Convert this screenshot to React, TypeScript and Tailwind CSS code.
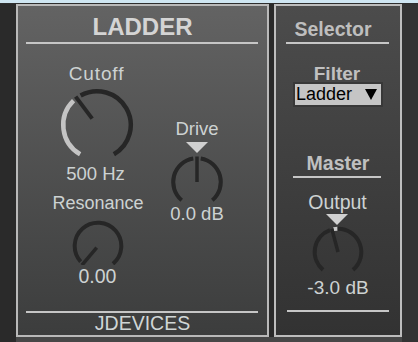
import React from "react";

type Arc = { a1: number; a2: number; color: string };
type KnobProps = {
  w: number;
  h: number;
  cx: number;
  cy: number;
  r: number;
  sw: number;
  arcs: Arc[];
  pa: number;
  pr1: number;
  pr2: number;
  psw: number;
};

const rad = (a: number) => (a * Math.PI) / 180;
const pt = (cx: number, cy: number, r: number, a: number) => [
  cx + r * Math.sin(rad(a)),
  cy - r * Math.cos(rad(a)),
];
const arcPath = (cx: number, cy: number, r: number, a1: number, a2: number) => {
  const [x1, y1] = pt(cx, cy, r, a1);
  const [x2, y2] = pt(cx, cy, r, a2);
  const large = a2 - a1 > 180 ? 1 : 0;
  return `M ${x1} ${y1} A ${r} ${r} 0 ${large} 1 ${x2} ${y2}`;
};

function Knob({ w, h, cx, cy, r, sw, arcs, pa, pr1, pr2, psw }: KnobProps) {
  const [x1, y1] = pt(cx, cy, pr1, pa);
  const [x2, y2] = pt(cx, cy, pr2, pa);
  return (
    <svg width={w} height={h} viewBox={`0 0 ${w} ${h}`} className="block shrink-0">
      {arcs.map((a, i) => (
        <path key={i} d={arcPath(cx, cy, r, a.a1, a.a2)} fill="none" stroke={a.color} strokeWidth={sw} />
      ))}
      <line x1={x1} y1={y1} x2={x2} y2={y2} stroke="#262626" strokeWidth={psw} />
    </svg>
  );
}

function Tri() {
  return (
    <svg width="22" height="11" viewBox="0 0 22 11" className="block shrink-0">
      <polygon points="0,0 22,0 11,11" fill="#d0d0d0" />
    </svg>
  );
}

const DARK = "#262626";

export default function App() {
  return (
    <div
      className="w-[418px] h-[342px] bg-[#2e2e2e] flex flex-col overflow-hidden"
      style={{ fontFamily: '"Liberation Sans", Arial, sans-serif' }}
    >
      <div className="h-[3px] bg-[#cfe6f2]" />
      <div className="flex pt-[1px]">
        <div className="w-[16px] bg-[#2a2a2a]" />
        {/* Panel 1 */}
        <div className="w-[253px] h-[333px] border-2 border-[#b9b9b9] bg-linear-to-b from-[#636363] to-[#3c3d3d] flex flex-col">
          <div className="text-center font-bold text-[24px] leading-none mt-[9px] text-[#d4d4d4]">LADDER</div>
          <div className="mt-[3px] ml-[8px] w-[232px] h-[2px] bg-[#c6c6c6]" />
          <div className="flex text-[#cdd2d2] leading-none">
            <div className="w-[157px] flex flex-col items-center">
              <div className="mt-[20px] text-[19px] tracking-[0.9px]">Cutoff</div>
              <div className="mt-[4px]">
                <Knob
                  w={76}
                  h={70}
                  cx={38}
                  cy={38}
                  r={33.75}
                  sw={4.5}
                  arcs={[
                    { a1: -150, a2: -44, color: "#c4c4c4" },
                    { a1: -29, a2: 150, color: DARK },
                  ]}
                  pa={-37}
                  pr1={8}
                  pr2={35.5}
                  psw={4}
                />
              </div>
              <div className="mt-[8px] mr-[2px] text-[18.5px] whitespace-nowrap">500 Hz</div>
              <div className="mt-[10px] ml-[3px] text-[18px]">Resonance</div>
              <div className="mt-[7px] ml-[3px]">
                <Knob
                  w={54}
                  h={46}
                  cx={27}
                  cy={27}
                  r={23.3}
                  sw={4}
                  arcs={[{ a1: -132, a2: 140, color: DARK }]}
                  pa={-140}
                  pr1={2}
                  pr2={25}
                  psw={3.5}
                />
              </div>
              <div className="mt-[2px] ml-[2px] text-[19.5px]">0.00</div>
            </div>
            <div className="w-[44px] flex flex-col items-center text-[18.5px]">
              <div className="mt-[76px]">Drive</div>
              <div className="mt-[3px]">
                <Tri />
              </div>
              <div className="mt-[1px]">
                <Knob
                  w={56}
                  h={50}
                  cx={28}
                  cy={28}
                  r={23.8}
                  sw={4}
                  arcs={[
                    { a1: -140, a2: -9, color: DARK },
                    { a1: 9, a2: 140, color: DARK },
                  ]}
                  pa={0}
                  pr1={0}
                  pr2={25.5}
                  psw={3.5}
                />
              </div>
              <div className="mt-[1px] whitespace-nowrap">0.0 dB</div>
            </div>
          </div>
          <div className="mt-auto ml-[8px] w-[232px] h-[2px] bg-[#c6c6c6]" />
          <div className="mt-[1px] mb-[2px] text-center text-[19.5px] leading-none text-[#d0d6d6]">JDEVICES</div>
        </div>
        <div className="w-[5px] bg-[#2a2a2a]" />
        {/* Panel 2 */}
        <div className="w-[128px] h-[333px] border-2 border-[#bdbdbd] bg-linear-to-b from-[#4c4c4c] to-[#323232] flex flex-col items-center">
          <div className="mt-[13px] mr-[10px] font-bold text-[19.5px] leading-[20px] text-[#bebebe]">Selector</div>
          <div className="mt-[3px] self-start ml-[10px] w-[103px] h-[2px] bg-[#c6c6c6]" />
          <div className="mt-[21px] mr-[2px] font-bold text-[19px] leading-[17px] text-[#c0c0c0]">Filter</div>
          <div className="w-[90px] h-[25px] border-2 border-[#383838] bg-[#c5c5c5] flex items-center justify-between pl-[1px] pr-[4px]">
            <span className="text-[18px] leading-[21px] text-black">Ladder</span>
            <svg width="12" height="11" viewBox="0 0 12 11" className="block">
              <polygon points="0,0 12,0 6,11" fill="#000" />
            </svg>
          </div>
          <div className="mt-[46px] font-bold text-[19.5px] leading-[20px] text-[#c0c0c0]">Master</div>
          <div className="mt-[3px] self-start ml-[17px] w-[88px] h-[2px] bg-[#c6c6c6]" />
          <div className="mt-[14px] mr-[1px] text-[19.5px] leading-[20px] text-[#cdd2d2]">Output</div>
          <div className="mt-[2px] mr-[2px]">
            <Tri />
          </div>
          <div className="mt-[-1px]">
            <Knob
              w={56}
              h={52}
              cx={28}
              cy={28}
              r={23.3}
              sw={4}
              arcs={[
                { a1: -140, a2: -20, color: DARK },
                { a1: -11, a2: -1, color: "#c8c8c8" },
                { a1: -1, a2: 140, color: DARK },
              ]}
              pa={-15}
              pr1={0}
              pr2={24}
              psw={3.5}
            />
          </div>
          <div className="mt-[2px] text-[19px] leading-none text-[#cdd2d2] whitespace-nowrap">-3.0 dB</div>
          <div className="mt-auto mb-[23px] self-start ml-[11px] w-[102px] h-[2px] bg-[#c6c6c6]" />
        </div>
        <div className="flex-1 bg-[#333333]" />
      </div>
      <div className="flex h-[5px]">
        <div className="w-[16px] bg-[#2a2a2a]" />
        <div className="w-[386px] bg-[#474747]" />
        <div className="flex-1 bg-[#333333]" />
      </div>
    </div>
  );
}
